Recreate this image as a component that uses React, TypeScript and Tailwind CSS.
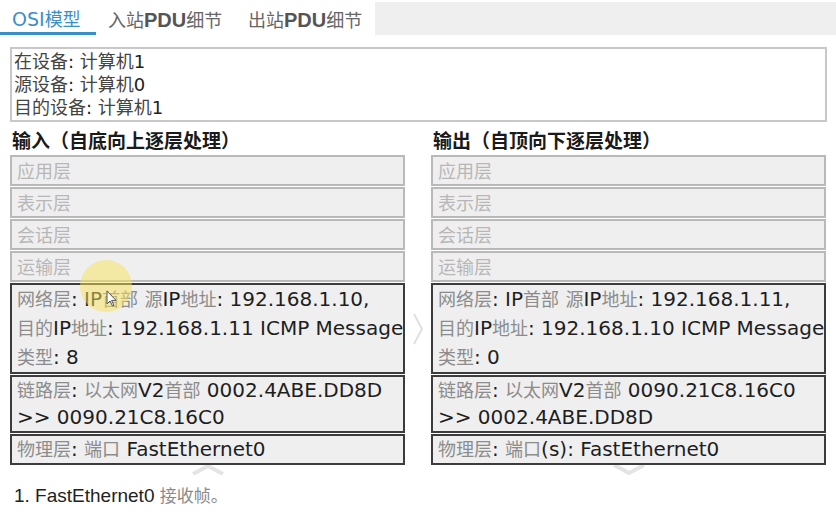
import React from "react";

const SANS = "font-['DejaVu_Sans','Noto_Sans_CJK_SC',sans-serif]";

// CJK runs are drawn lighter and a bit smaller than the Latin text around them
function Rich({ text, cjk }: { text: string; cjk: string }) {
  const parts = text.split(/([\u4e00-\u9fff\u3000-\u303f\uff08\uff09]+)/);
  return (
    <>
      {parts.map((p, i) =>
        /[\u4e00-\u9fff\u3000-\u303f\uff08\uff09]/.test(p) ? (
          <span key={i} className={cjk}>
            {p}
          </span>
        ) : (
          <span key={i}>{p}</span>
        )
      )}
    </>
  );
}

function IdleLayer({ name }: { name: string }) {
  return (
    <div className="h-[31px] border-2 border-[#b9b9b9] bg-[#efefef] pl-[5px] text-[18px] leading-[27px] text-[#b7b7b7] font-['Noto_Sans_CJK_SC',sans-serif]">
      {name}
    </div>
  );
}

function Layer({ lines, leading }: { lines: string[]; leading: string }) {
  return (
    <div className={`border-2 border-[#3c3c3c] bg-[#efefef] pl-[5px] text-[20px] text-[#1e1e1e] whitespace-nowrap overflow-hidden ${leading}`}>
      {lines.map((l, i) => (
        <div key={i}>
          <Rich text={l} cjk="text-[18px] text-[#8c8c8c]" />
        </div>
      ))}
    </div>
  );
}

function Column({
  title,
  net,
  link,
  phys,
  down,
}: {
  title: string;
  net: string[];
  link: string[];
  phys: string;
  down: boolean;
}) {
  return (
    <div className="w-[395px] flex flex-col">
      <div className="h-[24px] pl-[2px] text-[19px] leading-[24px] font-bold text-[#1a1a1a] font-['Noto_Sans_CJK_SC',sans-serif]">
        {title}
      </div>
      <div className="mt-[3px] flex flex-col gap-px">
        <IdleLayer name="应用层" />
        <IdleLayer name="表示层" />
        <IdleLayer name="会话层" />
        <IdleLayer name="运输层" />
        <Layer lines={net} leading="leading-[28px]" />
        <Layer lines={link} leading="leading-[27px]" />
        <Layer lines={[phys]} leading="leading-[27px]" />
      </div>
      <div className="flex justify-center">
        <svg width="34" height="10" viewBox="0 0 34 10">
          {down ? (
            <polyline points="2,0 17,8 32,0" fill="none" stroke="#e4e4e4" strokeWidth="4" />
          ) : (
            <polyline points="2,9 17,1 32,9" fill="none" stroke="#e4e4e4" strokeWidth="4" />
          )}
        </svg>
      </div>
    </div>
  );
}

export default function App() {
  return (
    <div className={`relative w-[836px] h-[525px] overflow-hidden bg-white ${SANS}`}>
      {/* tabs */}
      <div className="flex h-[35px] text-[19px]">
        <div className="w-[96px] pl-3 pt-[5px] border-b-[3px] border-[#3a8fc8] text-[#3a8fc8]">
          OSI<span className="text-[18px]">模型</span>
        </div>
        <div className="w-[140px] pl-3 pt-[5px] text-[#666]">
          <span className="text-[18px]">入站</span>
          <span className="font-bold text-[#555] font-['Liberation_Sans',sans-serif] text-[20px]">PDU</span>
          <span className="text-[18px]">细节</span>
        </div>
        <div className="w-[139px] pl-3 pt-[5px] text-[#666]">
          <span className="text-[18px]">出站</span>
          <span className="font-bold text-[#555] font-['Liberation_Sans',sans-serif] text-[20px]">PDU</span>
          <span className="text-[18px]">细节</span>
        </div>
        <div className="flex-1 mt-[2px] bg-[#efefef]" />
      </div>

      {/* device info */}
      <div className="mx-[10px] w-[817px] mt-[12px] h-[75px] border-2 border-[#c8c8c8] pl-[2px] pt-px text-[18px] leading-[23px] text-[#222]">
        <div>
          <Rich text="在设备: 计算机1" cjk="text-[#444]" />
        </div>
        <div>
          <Rich text="源设备: 计算机0" cjk="text-[#444]" />
        </div>
        <div>
          <Rich text="目的设备: 计算机1" cjk="text-[#444]" />
        </div>
      </div>

      {/* layers */}
      <div className="flex px-[10px] mt-[6px]">
        <Column
          title="输入（自底向上逐层处理）"
          net={["网络层: IP首部 源IP地址: 192.168.1.10,", "目的IP地址: 192.168.1.11 ICMP Message", "类型: 8"]}
          link={["链路层: 以太网V2首部 0002.4ABE.DD8D", ">> 0090.21C8.16C0"]}
          phys="物理层: 端口 FastEthernet0"
          down={false}
        />
        <div className="w-[27px] flex justify-center pt-[185px]">
          <svg width="12" height="32" viewBox="0 0 12 32">
            <polyline points="2,1 10,16 2,31" fill="none" stroke="#e0e0e0" strokeWidth="2" />
          </svg>
        </div>
        <Column
          title="输出（自顶向下逐层处理）"
          net={["网络层: IP首部 源IP地址: 192.168.1.11,", "目的IP地址: 192.168.1.10 ICMP Message", "类型: 0"]}
          link={["链路层: 以太网V2首部 0090.21C8.16C0", ">> 0002.4ABE.DD8D"]}
          phys="物理层: 端口(s): FastEthernet0"
          down={true}
        />
      </div>

      <div className="mt-[9px] pl-[14px] text-[19px] leading-[24px] text-[#222] font-['Liberation_Sans','Noto_Sans_CJK_SC',sans-serif]">
        1. FastEthernet0 <span className="text-[17px] text-[#8a8a8a]">接收帧。</span>
      </div>

      {/* cursor highlight */}
      <div className="absolute left-[80px] top-[260px] w-[52px] h-[52px] rounded-full bg-[#f8e25a] opacity-50 pointer-events-none" />
      <svg className="absolute left-[106px] top-[290px]" width="11" height="17" viewBox="0 0 11 17">
        <path d="M1 1 L1 14 L4 11 L6.5 16 L8 15.3 L5.6 10.4 L10 10.4 Z" fill="#fff" stroke="#555" strokeWidth="1" />
      </svg>
    </div>
  );
}
